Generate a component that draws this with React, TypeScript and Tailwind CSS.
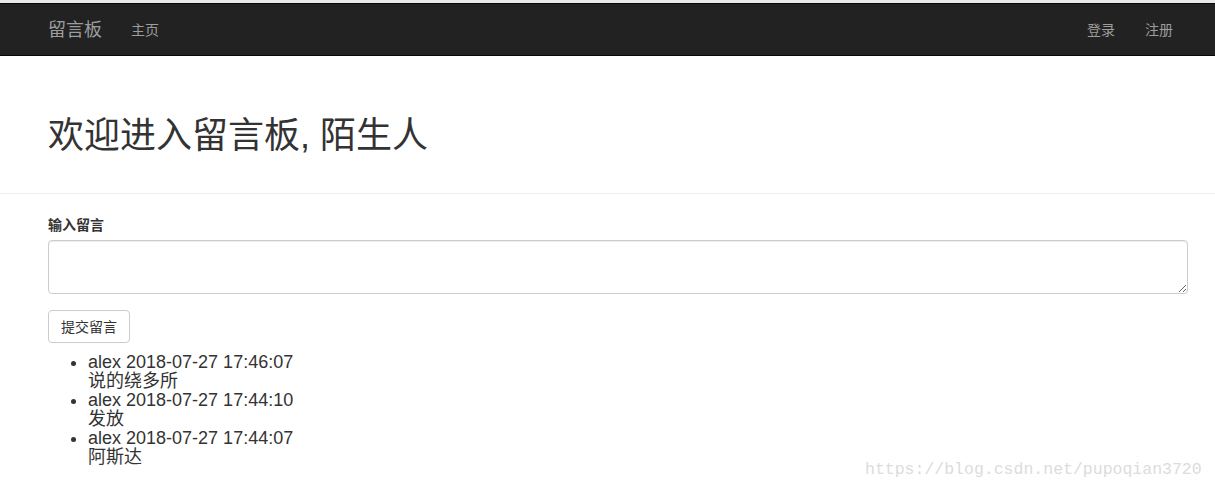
import React from 'react';

const messages = [
  { user: 'alex', time: '2018-07-27 17:46:07', body: '说的绕多所' },
  { user: 'alex', time: '2018-07-27 17:44:10', body: '发放' },
  { user: 'alex', time: '2018-07-27 17:44:07', body: '阿斯达' },
];

const App = () => {
  return (
    <div className="relative min-h-[491px] bg-white font-['Liberation_Sans','Noto_Sans_CJK_SC',sans-serif] text-[#333]">
      <div className="h-[3px] bg-[#e9e9e9]" />
      <nav className="flex h-[53px] items-center border-y border-[#080808] bg-[#222] pl-[48px] pr-[27px] text-[#9d9d9d]">
        <span className="text-[18px] leading-[20px]">留言板</span>
        <a className="ml-[29px] text-[14px] leading-[20px]">主页</a>
        <div className="ml-auto flex gap-[30px] text-[14px] leading-[20px]">
          <a>登录</a>
          <a className="mr-[15px]">注册</a>
        </div>
      </nav>

      <header className="border-b border-[#eee] pb-[37px] pl-[48px] pt-[60px]">
        <h1 className="text-[36px] leading-[40px]">欢迎进入留言板, 陌生人</h1>
      </header>

      <main className="pl-[48px] pr-[27px] pt-[21px]">
        <label className="block text-[14px] font-bold leading-[20px]">输入留言</label>
        <textarea className="mt-[5px] block h-[54px] w-full rounded-[4px] border border-[#ccc] px-3 py-1.5 text-[14px] shadow-[inset_0_1px_1px_rgba(0,0,0,0.075)]" />
        <button className="mt-[16px] h-[33px] rounded-[4px] border border-[#ccc] bg-white px-[12px] text-[14px] leading-[20px] text-[#333]">
          提交留言
        </button>
        <ul className="mt-[10px] list-disc pl-[40px] text-[18px] leading-[19px]">
          {messages.map((m) => (
            <li key={m.time}>
              {m.user} {m.time}
              <br />
              {m.body}
            </li>
          ))}
        </ul>
      </main>

      <div className="absolute left-[865px] top-[461px] font-['Liberation_Mono',monospace] text-[16.5px] leading-[18px] text-[#dcdcdc]">
        https://blog.csdn.net/pupoqian3720
      </div>
    </div>
  );
};

export default App;
